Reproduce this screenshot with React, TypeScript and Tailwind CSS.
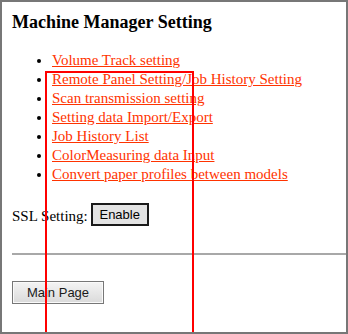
import React from "react";

const links = [
  "Volume Track setting",
  "Remote Panel Setting/Job History Setting",
  "Scan transmission setting",
  "Setting data Import/Export",
  "Job History List",
  "ColorMeasuring data Input",
  "Convert paper profiles between models",
];

export default function App() {
  return (
    <div
      className="relative w-[348px] h-[334px] overflow-hidden border-2 border-[#777777] bg-white text-black"
      style={{ fontFamily: '"Liberation Serif", "Times New Roman", serif' }}
    >
      <div className="pl-[10px]">
        <h3 className="mt-[9px] text-[18px] leading-[22px] font-bold">Machine Manager Setting</h3>
        <ul className="mt-[18px] list-disc pl-[40px] text-[15px] leading-[19px]">
          {links.map((l) => (
            <li key={l}>
              <a href="#" className="text-[#ff3300] underline decoration-[#ff3300]">
                {l}
              </a>
            </li>
          ))}
        </ul>
        <div className="mt-[19px] flex items-end h-[23px]">
          <span className="text-[15px] leading-[19px]">SSL Setting:</span>
          <button
            className="ml-[3px] h-[23px] w-[58px] border-2 border-[#1a1a1a] bg-[#e3e3e3] text-[13px] text-black"
            style={{ fontFamily: '"Liberation Sans", Arial, sans-serif' }}
          >
            Enable
          </button>
        </div>
        <div className="mt-[27px] h-[2px] bg-[#a8a8a8]" />
        <button
          className="mt-[26px] h-[23px] w-[92px] border border-[#777777] bg-gradient-to-b from-[#f4f4f4] to-[#dadada] text-[13px] text-[#1a1a1a] shadow-[inset_0_0_0_1px_#fafafa]"
          style={{ fontFamily: '"Liberation Sans", Arial, sans-serif' }}
        >
          Main Page
        </button>
      </div>
      <div className="absolute left-[43px] top-[69px] w-[149px] h-[300px] border-2 border-[#ff0000] pointer-events-none" />
    </div>
  );
}
